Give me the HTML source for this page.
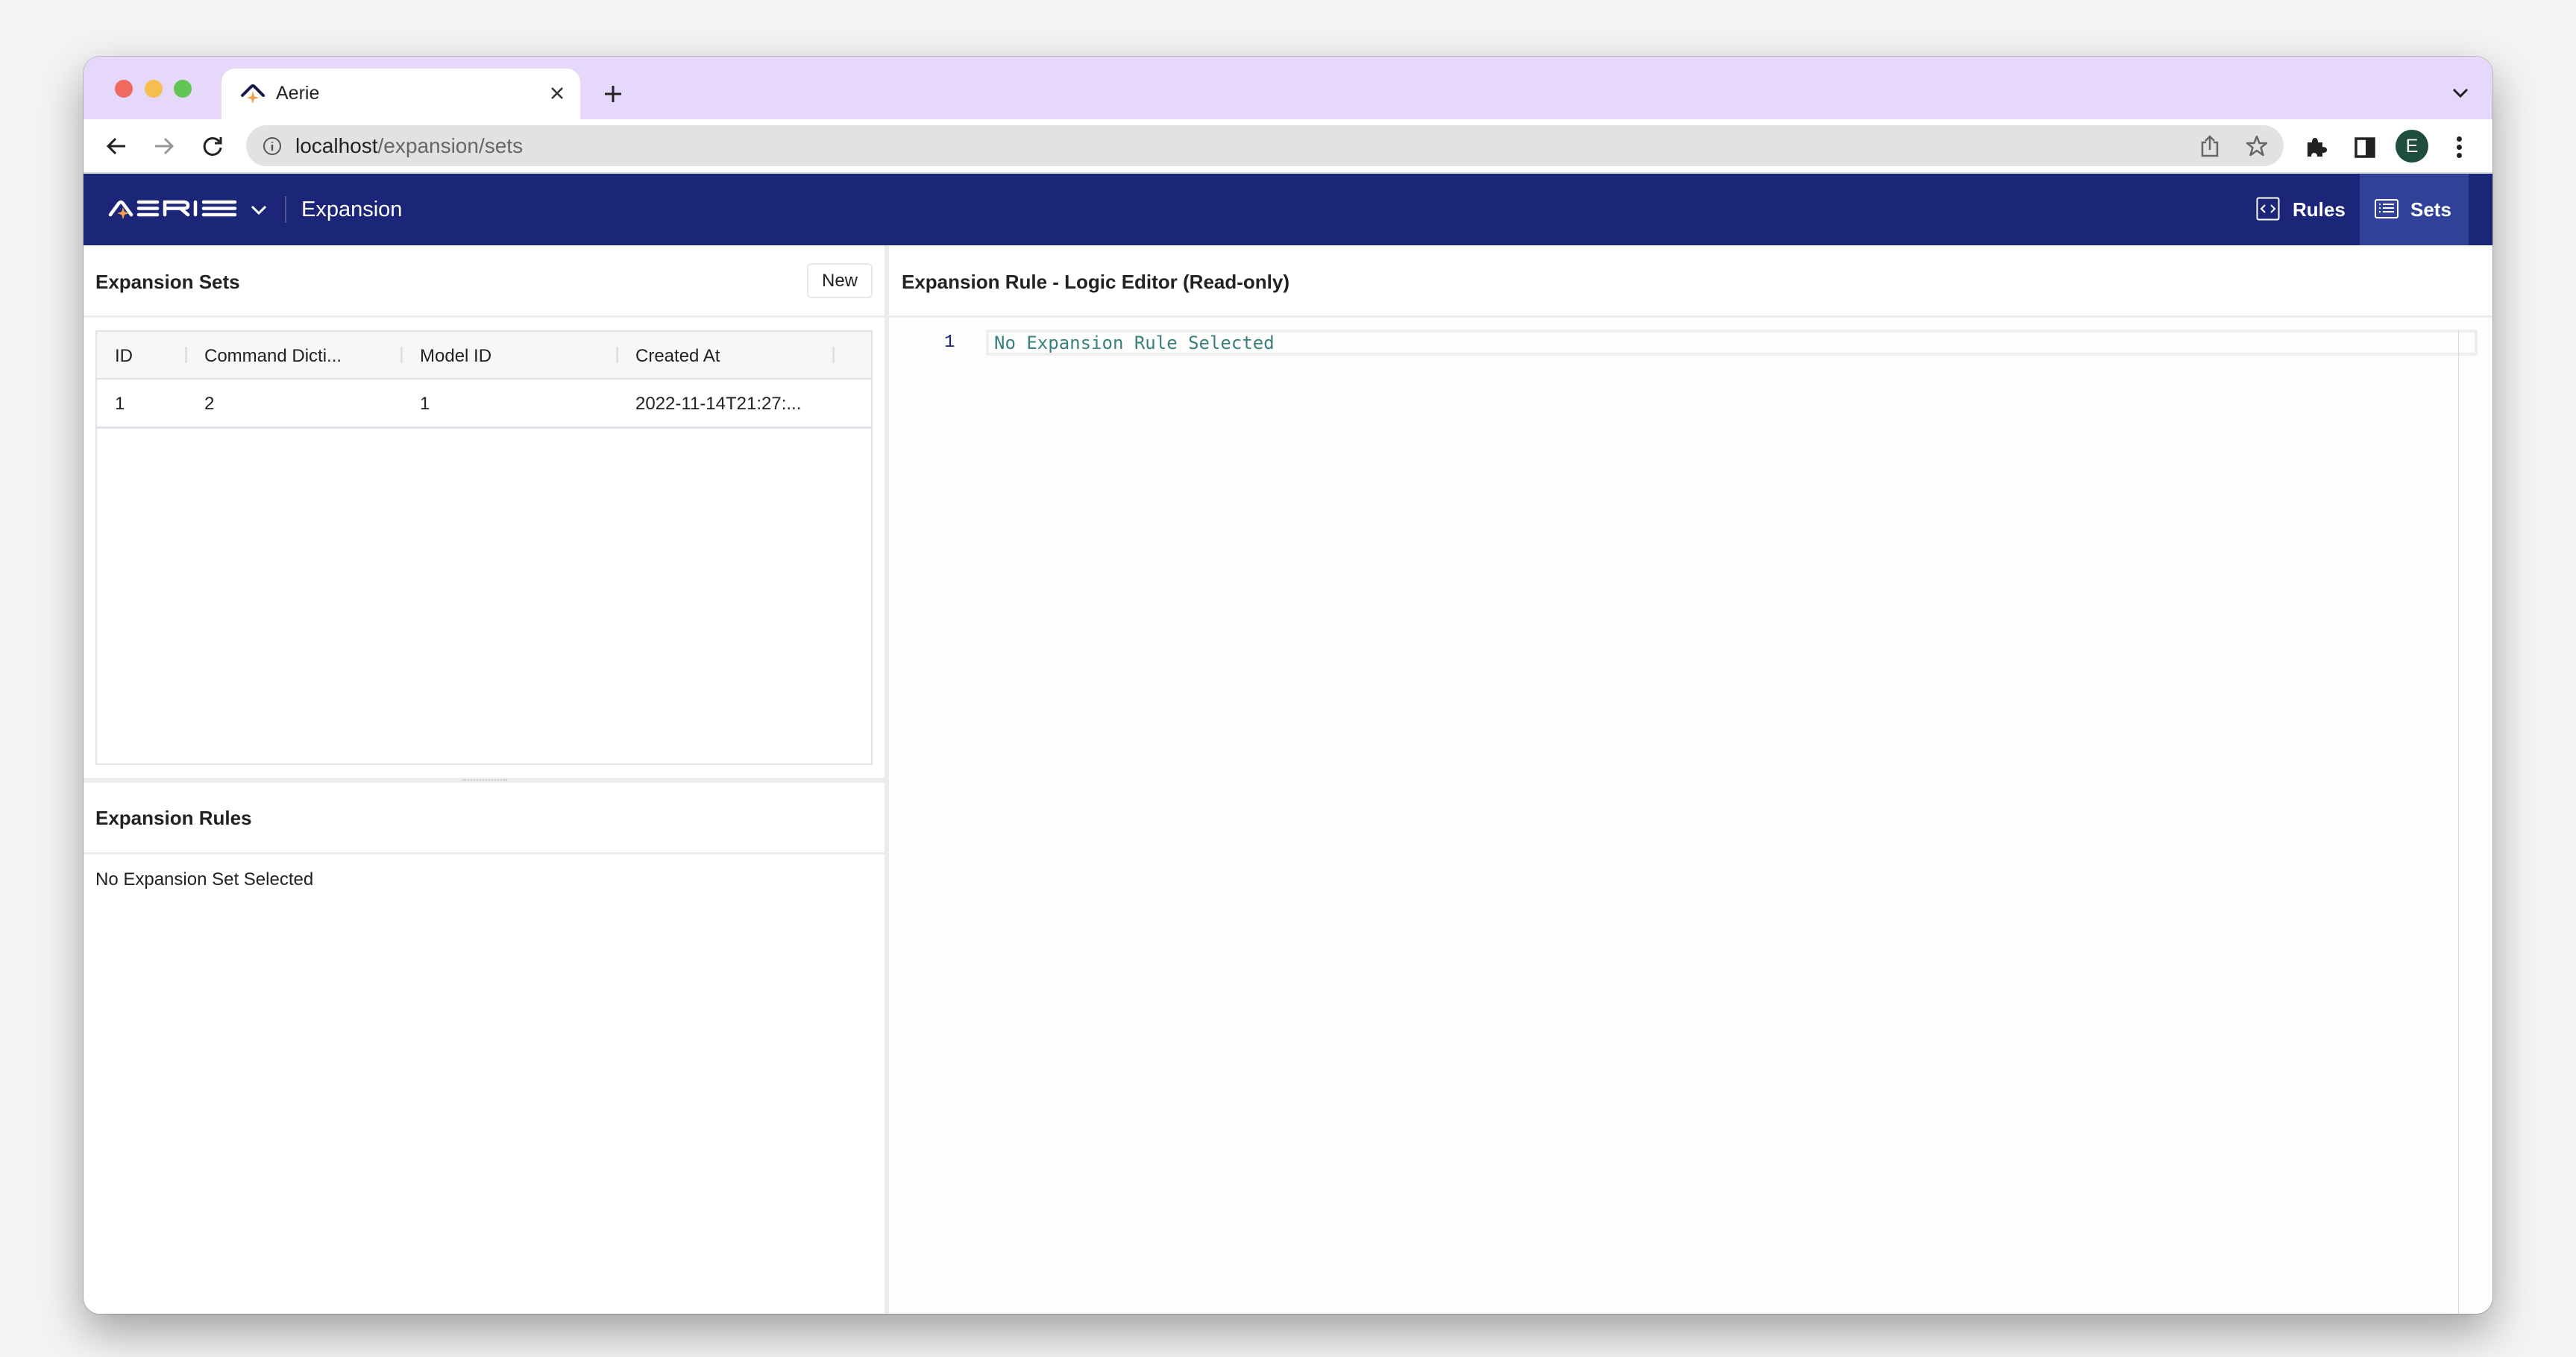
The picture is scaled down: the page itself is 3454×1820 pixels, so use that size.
<!DOCTYPE html>
<html><head><meta charset="utf-8"><style>
*{box-sizing:border-box;margin:0;padding:0}
body{width:3454px;height:1820px;background:#f4f4f4;font-family:"Liberation Sans",sans-serif;position:relative;overflow:hidden}
.abs{position:absolute}
.win{left:112px;top:76px;width:3230px;height:1686px;border-radius:22px;background:#fff;overflow:hidden;box-shadow:0 24px 60px rgba(0,0,0,.35),0 0 0 1px rgba(0,0,0,.18)}
.tabbar{left:0;top:0;width:100%;height:84px;background:#e5d8fa}
.dot{width:24px;height:24px;border-radius:50%;top:31px}
.tab{left:185px;top:16px;width:481px;height:68px;background:#fff;border-radius:18px 18px 0 0}
.toolbar{left:0;top:84px;width:100%;height:73px;background:#fff;border-bottom:2px solid #d6d6d6}
.url{left:218px;top:8px;width:2732px;height:55px;border-radius:28px;background:#e2e2e2}
.nav{left:0;top:157px;width:100%;height:96px;background:#1b2678}
.t{white-space:nowrap}
.hdr{font-size:26px;font-weight:bold;color:#222}
.cell{font-size:24px;color:#222}
</style></head><body>
<div class="abs win">
  <div class="abs tabbar">
    <div class="abs dot" style="left:42px;background:#ee6a5f"></div>
    <div class="abs dot" style="left:82px;background:#f5bf4f"></div>
    <div class="abs dot" style="left:121px;background:#62c554"></div>
    <div class="abs tab">
      <svg class="abs" style="left:25px;top:21px" width="34" height="26" viewBox="0 0 34 26"><path d="M3 15 L15 3 Q17 1 19 3 L31 15" fill="none" stroke="#14194d" stroke-width="4" stroke-linecap="round"/><path d="M17 9 L19 16 L25 18 L19 20 L17 26 L15 20 L9 18 L15 16Z" fill="#f0a050"/></svg>
      <div class="abs t" style="left:73px;top:19px;font-size:25px;color:#222">Aerie</div>
      <svg class="abs" style="left:441px;top:24px" width="18" height="18" viewBox="0 0 18 18"><path d="M2 2L16 16M16 2L2 16" stroke="#333" stroke-width="2.5"/></svg>
    </div>
    <svg class="abs" style="left:698px;top:38px" width="24" height="24" viewBox="0 0 24 24"><path d="M12 1V23M1 12H23" stroke="#222" stroke-width="3"/></svg>
    <svg class="abs" style="left:3176px;top:42px" width="22" height="14" viewBox="0 0 22 14"><path d="M2 2L11 11L20 2" fill="none" stroke="#222" stroke-width="3"/></svg>
  </div>
  <div class="abs toolbar">
    <svg class="abs" style="left:30px;top:22px" width="28" height="28" viewBox="0 0 28 28"><path d="M26 14H4M13 4L3 14L13 24" fill="none" stroke="#222" stroke-width="3"/></svg>
    <svg class="abs" style="left:94px;top:22px" width="28" height="28" viewBox="0 0 28 28"><path d="M2 14H24M15 4L25 14L15 24" fill="none" stroke="#999" stroke-width="3"/></svg>
    <svg class="abs" style="left:158px;top:21px" width="30" height="30" viewBox="0 0 30 30"><path d="M24 9A11 11 0 1 0 26 17" fill="none" stroke="#222" stroke-width="3"/><path d="M26 3V11H18" fill="none" stroke="#222" stroke-width="3"/></svg>
    <div class="abs url">
      <svg class="abs" style="left:22px;top:15px" width="26" height="26" viewBox="0 0 26 26"><circle cx="13" cy="13" r="11" fill="none" stroke="#555" stroke-width="2"/><path d="M13 11V19M13 7V8.5" stroke="#555" stroke-width="2.5"/></svg>
      <div class="abs t" style="left:66px;top:12px;font-size:28px;color:#222">localhost<span style="color:#666">/expansion/sets</span></div>
      <svg class="abs" style="left:2620px;top:13px" width="26" height="30" viewBox="0 0 26 30"><path d="M8 10H3V28H23V10H18M13 20V2M7 8L13 2L19 8" fill="none" stroke="#666" stroke-width="2.5"/></svg>
      <svg class="abs" style="left:2681px;top:13px" width="30" height="30" viewBox="0 0 30 30"><path d="M15 2L18.5 11H28L20.5 17L23.5 27L15 21L6.5 27L9.5 17L2 11H11.5Z" fill="none" stroke="#666" stroke-width="2.5" stroke-linejoin="round"/></svg>
    </div>
    <svg class="abs" style="left:2978px;top:22px" width="30" height="30" viewBox="0 0 30 30"><path d="M4 9H10Q10 3 14 3Q18 3 18 9H24V15Q30 15 30 19Q30 23 24 23V28H17Q17 23 13 23Q9 23 9 28H4Z" fill="#222"/></svg>
    <svg class="abs" style="left:3045px;top:24px" width="28" height="28" viewBox="0 0 28 28"><rect x="2" y="2" width="24" height="24" fill="none" stroke="#222" stroke-width="3.5"/><rect x="15" y="2" width="11" height="24" fill="#222"/></svg>
    <div class="abs" style="left:3100px;top:14px;width:44px;height:44px;border-radius:50%;background:#1e4d3e;color:#fff;font-size:25px;text-align:center;line-height:44px">E</div>
    <div class="abs" style="left:3182px;top:23px;width:7px;height:7px;border-radius:50%;background:#222;box-shadow:0 11px 0 #222,0 22px 0 #222"></div>
  </div>
  <div class="abs nav">
    <svg class="abs" style="left:33px;top:35px" width="178" height="26" viewBox="0 0 178 26" fill="none" stroke="#fff" stroke-width="4.5" stroke-linecap="round">
      <path d="M3 20 L14 5 Q17 1 20 5 L31 20"/>
      <path d="M41 3H66M41 11.5H66M41 20H66"/>
      <path d="M76 20V3H101Q107 3 107 7.5Q107 11.5 101 11.5H78M97 11.5L107 20"/>
      <path d="M117 3V20"/>
      <path d="M128 3H170M128 11.5H170M128 20H170"/>
      <path d="M20 10 L22 16 L28 18 L22 20 L20 26 L18 20 L12 18 L18 16Z" fill="#f0a050" stroke="none"/>
    </svg>
    <svg class="abs" style="left:224px;top:42px" width="22" height="14" viewBox="0 0 22 14"><path d="M2 2L11 11L20 2" fill="none" stroke="#fff" stroke-width="3"/></svg>
    <div class="abs" style="left:270px;top:30px;width:2px;height:36px;background:#4a5496"></div>
    <div class="abs t" style="left:292px;top:32px;font-size:29px;color:#fff">Expansion</div>
    <svg class="abs" style="left:2913px;top:31px" width="32" height="32" viewBox="0 0 32 32"><rect x="1.5" y="1.5" width="29" height="29" rx="2" fill="none" stroke="#fff" stroke-width="2"/><path d="M12 11L7 16L12 21M20 11L25 16L20 21" fill="none" stroke="#fff" stroke-width="2"/></svg>
    <div class="abs t" style="left:2962px;top:33px;font-size:26px;font-weight:bold;color:#fff">Rules</div>
    <div class="abs" style="left:3052px;top:0;width:146px;height:96px;background:#2f4297"></div>
    <svg class="abs" style="left:3072px;top:34px" width="32" height="26" viewBox="0 0 32 26"><rect x="1" y="1" width="30" height="24" rx="2" fill="none" stroke="#fff" stroke-width="2"/><path d="M6 7H8M6 12H8M6 17H8M11 7H26M11 12H26M11 17H26" stroke="#fff" stroke-width="2"/></svg>
    <div class="abs t" style="left:3120px;top:33px;font-size:26px;font-weight:bold;color:#fff">Sets</div>
  </div>
  <!-- left panel -->
  <div class="abs" style="left:0;top:253px;width:1074px;height:1433px;background:#fff">
    <div class="abs t hdr" style="left:16px;top:34px">Expansion Sets</div>
    <div class="abs t" style="left:970px;top:24px;width:88px;height:47px;border:2px solid #e8e8e8;border-radius:6px;font-size:24px;color:#222;text-align:center;line-height:43px">New</div>
    <div class="abs" style="left:0;top:94px;width:100%;height:3px;background:#ececec"></div>
    <div class="abs" style="left:16px;top:114px;width:1042px;height:583px;border:2px solid #e2e2e2;background:#fff">
      <div class="abs" style="left:0;top:0;width:100%;height:64px;background:#f7f7f7;border-bottom:2px solid #e2e2e2"></div>
      <div class="abs t cell" style="left:24px;top:19px">ID</div>
      <div class="abs t cell" style="left:144px;top:19px">Command Dicti...</div>
      <div class="abs t cell" style="left:433px;top:19px">Model ID</div>
      <div class="abs t cell" style="left:722px;top:19px">Created At</div>
      <div class="abs" style="left:118px;top:20px;width:3px;height:22px;background:#dde1ea"></div>
      <div class="abs" style="left:407px;top:20px;width:3px;height:22px;background:#dde1ea"></div>
      <div class="abs" style="left:696px;top:20px;width:3px;height:22px;background:#dde1ea"></div>
      <div class="abs" style="left:986px;top:20px;width:3px;height:22px;background:#dde1ea"></div>
      <div class="abs t cell" style="left:24px;top:83px">1</div>
      <div class="abs t cell" style="left:144px;top:83px">2</div>
      <div class="abs t cell" style="left:433px;top:83px">1</div>
      <div class="abs t cell" style="left:722px;top:83px">2022-11-14T21:27:...</div>
      <div class="abs" style="left:0;top:127px;width:100%;height:3px;background:#e0e3ea"></div>
    </div>
    <div class="abs" style="left:0;top:714px;width:100%;height:7px;background:#ececec"></div>
    <div class="abs" style="left:508px;top:716px;width:60px;height:3px;border-top:2px dotted #ccc"></div>
    <div class="abs t hdr" style="left:16px;top:753px">Expansion Rules</div>
    <div class="abs" style="left:0;top:814px;width:100%;height:3px;background:#ececec"></div>
    <div class="abs t" style="left:16px;top:837px;font-size:24px;color:#222">No Expansion Set Selected</div>
  </div>
  <div class="abs" style="left:1074px;top:253px;width:6px;height:1433px;background:#ececec"></div>
  <!-- right panel -->
  <div class="abs" style="left:1080px;top:253px;width:2150px;height:1433px;background:#fdfdfb">
    <div class="abs" style="left:0;top:0;width:100%;height:94px;background:#fff"></div>
    <div class="abs t hdr" style="left:17px;top:34px">Expansion Rule - Logic Editor (Read-only)</div>
    <div class="abs" style="left:0;top:94px;width:100%;height:3px;background:#ececec"></div>
    <div class="abs t" style="left:74px;top:117px;font-family:'Liberation Mono',monospace;font-size:24px;color:#1b2678">1</div>
    <div class="abs" style="left:130px;top:113px;width:2000px;height:35px;border:4px solid #eeeeee"></div>
    <div class="abs t" style="left:141px;top:117px;font-family:'DejaVu Sans Mono','Liberation Mono',monospace;font-size:24px;color:#3a8080">No Expansion Rule Selected</div>
    <div class="abs" style="left:2104px;top:113px;width:1px;height:1380px;background:#d8d8d8"></div>
  </div>
</div>
</body></html>
